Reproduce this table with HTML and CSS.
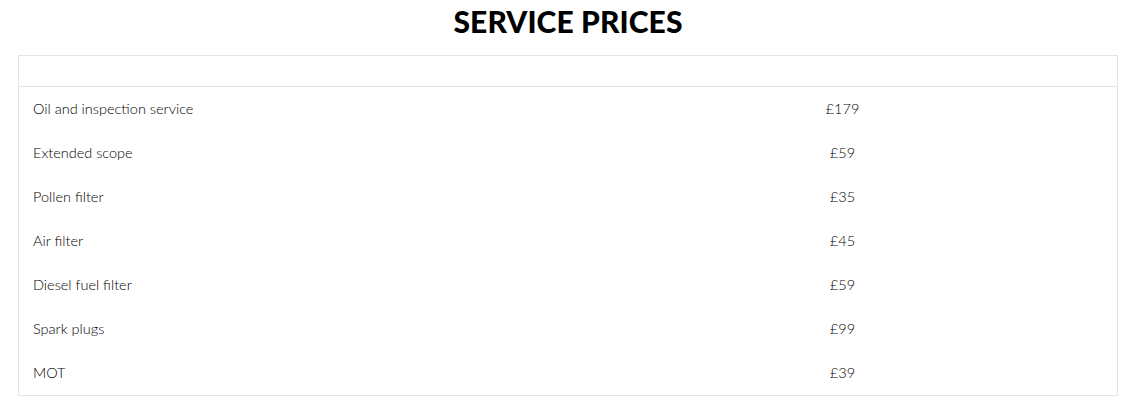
FILE: index.html
```html
<!DOCTYPE html>
<html>
<head>
<meta charset="utf-8">
<link rel="stylesheet" href="styles.css">
</head>
<body>
<h1 class="title">SERVICE PRICES</h1>
<table class="prices">
  <thead><tr><th></th><th></th></tr></thead>
  <tbody>
    <tr><td>Oil and inspection service</td><td class="price">£179</td></tr>
    <tr><td>Extended scope</td><td class="price">£59</td></tr>
    <tr><td>Pollen filter</td><td class="price">£35</td></tr>
    <tr><td>Air filter</td><td class="price">£45</td></tr>
    <tr><td>Diesel fuel filter</td><td class="price">£59</td></tr>
    <tr><td>Spark plugs</td><td class="price">£99</td></tr>
    <tr><td>MOT</td><td class="price">£39</td></tr>
  </tbody>
</table>
</body>
</html>
```
FILE: styles.css
```css
html, body { margin: 0; background: #fff; }
body { padding: 0 20px 0 18px; font-family: "Lato", "Open Sans", sans-serif; color: #000; }
.title {
  margin: 0;
  padding-top: 5px;
  height: 55px;
  box-sizing: border-box;
  text-align: center;
  font-family: "Lato", sans-serif;
  font-weight: 900;
  font-size: 30px;
  line-height: 32px;
  color: #000;
  letter-spacing: 0.1px;
}
.prices {
  width: 100%;
  border-collapse: collapse;
  table-layout: fixed;
  border: 1px solid #e4e4e4;
}
.prices thead th {
  height: 30px;
  padding: 0;
  border-bottom: 1px solid #e4e4e4;
}
.prices td {
  height: 44px;
  padding: 0 0 0 14px;
  font-size: 14.5px;
  font-weight: 300;
  line-height: 44px;
  vertical-align: middle;
}
.prices td.price { text-align: center; padding: 0; }
```
